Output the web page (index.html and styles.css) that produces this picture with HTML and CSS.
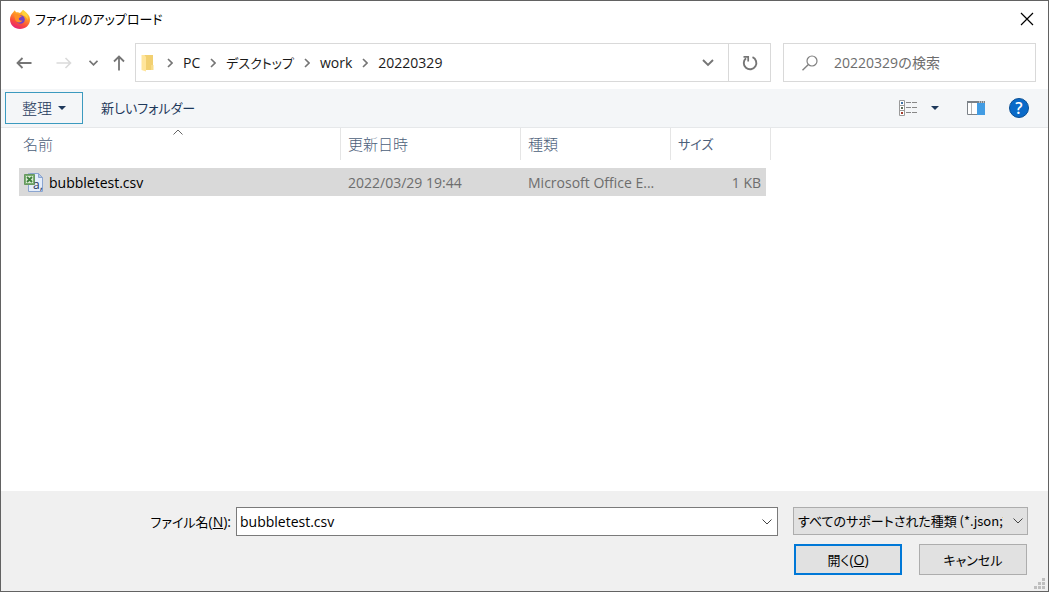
FILE: index.html
```html
<!DOCTYPE html>
<html lang="ja">
<head>
  <meta charset="UTF-8">
  <title>ファイルのアップロード</title>
  <link rel="stylesheet" href="styles.css">
</head>
<body>

<div class="dialog">
  <header class="title-bar">
    <svg class="app-icon" width="20" height="20" viewBox="0 0 20 20">
      <defs>
        <linearGradient id="flame" x1="0.8" y1="0" x2="0.3" y2="1">
          <stop offset="0" stop-color="#ffe14a"/>
          <stop offset="0.35" stop-color="#ff9a26"/>
          <stop offset="0.7" stop-color="#fb4a3c"/>
          <stop offset="1" stop-color="#e3207d"/>
        </linearGradient>
      </defs>
      <path fill="url(#flame)" d="M3 3.5 4.8 1.2 6 3.2 8 3.3 10 4 13 1 16.5 3.8C19 6 20 8 20 11 20 16 15.500 20 10 20S0 16 0 10.500C0 7.500 1 5.500 3 3.500Z"/>
      <circle cx="10.500" cy="10.500" r="4.300" fill="#7542c4"/>
      <path fill="#ff9025" d="M4 6C6 4.500 8 4.500 10 6.500L12 7C11 8.500 9.500 8 8.800 9.500 8.500 11 10 12 12.500 11.500 11 14 7 14 5.500 11.500Z"/>
      <path fill="#ffd43d" d="M13 1C17 3.500 18.500 7 17.500 11 16.800 8.500 15.500 7 13.500 6.500 11.500 5 11.500 3 13 1Z"/>
    </svg>
    <h1 class="kana">ファイルのアップロード</h1>
    <button class="close" aria-label="閉じる">
      <svg width="14" height="14" viewBox="0 0 14 14"><path d="M1 1 13 13M13 1 1 13" fill="none" stroke="#000" stroke-width="1.200"/></svg>
    </button>
  </header>

  <nav class="nav-bar">
    <div class="nav-buttons">
      <button aria-label="戻る"><svg width="16" height="12" viewBox="0 0 16 12"><path d="M15.500 6H1.500M6.500 1 1.500 6 6.500 11" fill="none" stroke="#757575" stroke-width="1.800"/></svg></button>
      <button class="forward" aria-label="進む" disabled><svg width="16" height="12" viewBox="0 0 16 12"><path d="M0.500 6H14.500M9.500 1 14.500 6 9.500 11" fill="none" stroke="#dadada" stroke-width="1.600"/></svg></button>
      <button class="recent" aria-label="最近表示した場所"><svg width="9" height="6" viewBox="0 0 9 6"><path d="M0.500 0.800 4.500 4.800 8.500 0.800" fill="none" stroke="#757575" stroke-width="1.700"/></svg></button>
      <button class="up" aria-label="上へ"><svg width="12" height="16" viewBox="0 0 12 16"><path d="M6 15.500V1.500M1 6.500 6 1.500 11 6.500" fill="none" stroke="#757575" stroke-width="1.800"/></svg></button>
    </div>
    <div class="address">
      <svg class="folder" width="13" height="18" viewBox="0 0 13 18">
        <path d="M2 1H12V16H2Z" fill="#f2d071"/>
        <path d="M0.500 1H3.500L5 3V17.500L0.500 16Z" fill="#ffe59b"/>
        <path d="M10 11H12.500V16H10Z" fill="#f8dc88"/>
      </svg>
      <svg class="sep" width="6" height="10" viewBox="0 0 6 10"><path d="M1 1 5 5 1 9"/></svg>
      <a href="#">PC</a>
      <svg class="sep" width="6" height="10" viewBox="0 0 6 10"><path d="M1 1 5 5 1 9"/></svg>
      <a href="#"><span class="kana">デスクトップ</span></a>
      <svg class="sep" width="6" height="10" viewBox="0 0 6 10"><path d="M1 1 5 5 1 9"/></svg>
      <a href="#">work</a>
      <svg class="sep" width="6" height="10" viewBox="0 0 6 10"><path d="M1 1 5 5 1 9"/></svg>
      <a href="#">20220329</a>
      <button class="history" aria-label="以前の場所"><svg width="12" height="8" viewBox="0 0 12 8"><path d="M1 1 6 6 11 1" fill="none" stroke="#757575" stroke-width="1.900"/></svg></button>
      <button class="refresh" aria-label="更新">
        <svg width="16" height="16" viewBox="0 0 16 16"><path d="M10.500 2.200A6.300 6.300 0 1 1 4 3.200" fill="none" stroke="#757575" stroke-width="1.900"/><path d="M1.500 1.800H6.200V6.500" fill="none" stroke="#757575" stroke-width="1.700"/></svg>
      </button>
    </div>
    <label class="search">
      <svg width="16" height="16" viewBox="0 0 16 16"><circle cx="10" cy="6" r="5" fill="none" stroke="#808080" stroke-width="1.200"/><path d="M6.400 9.600 0.500 15.300" stroke="#808080" stroke-width="1.400"/></svg>
      <input type="text" placeholder="20220329の検索" aria-label="20220329の検索">
    </label>
  </nav>

  <div class="toolbar">
    <button class="organize"><span class="jp">整理</span><svg width="8" height="4" viewBox="0 0 8 4"><path d="M0 0H8L4 4Z" fill="#1e395b"/></svg></button>
    <button class="new-folder"><span class="kana">新しいフォルダー</span></button>
    <button class="view" aria-label="表示方法">
      <svg width="18" height="16" viewBox="0 0 18 16">
        <path d="M0.500 0.500H5.500V15.500H0.500ZM0.500 5.500H5.500M0.500 10.500H5.500" fill="#fff" stroke="#9a9a9a"/>
        <path d="M2 2H4V4H2Z" fill="#3f73a8"/>
        <path d="M2 7H4V9H2Z" fill="#5d6b57"/>
        <path d="M2 12H4V14H2Z" fill="#a33b2b"/>
        <path d="M7 2.500H12M13 2.500H18M7 7.500H12M13 7.500H18M7 12.500H12M13 12.500H18" stroke="#888"/>
      </svg>
    </button>
    <button class="view-menu" aria-label="その他のオプション"><svg width="8" height="4" viewBox="0 0 8 4"><path d="M0 0H8L4 4Z" fill="#1e395b"/></svg></button>
    <button class="preview" aria-label="プレビュー ウィンドウ">
      <svg width="18" height="14" viewBox="0 0 18 14">
        <path d="M0.500 0.500H17.500V13.500H0.500Z" fill="#fff" stroke="#7c8288"/>
        <path d="M0 0H18V2H0Z" fill="#7c8288"/>
        <path d="M4.500 2V13" stroke="#b5b5b5"/>
        <path d="M10 2H18V14H10Z" fill="#429ce3"/>
        <path d="M12 1H13M14 1H15M16 1H17" stroke="#fff"/>
      </svg>
    </button>
    <button class="help" aria-label="ヘルプ">?</button>
  </div>

  <main class="files">
    <table>
      <thead>
        <tr>
          <th class="name">
            <span class="jp">名前</span>
            <svg class="sort" width="10" height="6" viewBox="0 0 10 6"><path d="M0.500 5.500 5 1 9.500 5.500" fill="none" stroke="#666"/></svg>
          </th>
          <th class="date"><span class="jp">更新日時</span></th>
          <th class="type"><span class="jp">種類</span></th>
          <th class="size"><span class="kana">サイズ</span></th>
        </tr>
      </thead>
      <tbody>
        <tr>
          <td class="file-name">
            <div class="file">
              <svg width="20" height="20" viewBox="0 0 20 20">
                <path d="M5.500 0.500H14.500L18.500 4.500V18.500H4.500V0.500Z" fill="#e4edfb" stroke="#8ba5d0"/>
                <path d="M14.500 0.500V4.500H18.500Z" fill="#b7c9e8" stroke="#8ba5d0"/>
                <path d="M0.500 1.500H10.500V11.500H0.500Z" fill="#79ad70" stroke="#67985f"/>
                <path d="M2 3H9V10H2Z" fill="#dcebd6"/>
                <path d="M3 4 8 9M8 4 3 9" stroke="#3d7f3a" stroke-width="1.800"/>
                <text x="9" y="16" class="icon-letter">a,</text>
              </svg>
              bubbletest.csv
            </div>
          </td>
          <td>2022/03/29 19:44</td>
          <td>Microsoft Office E...</td>
          <td class="file-size">1 KB</td>
        </tr>
      </tbody>
    </table>
  </main>

  <footer class="actions">
    <label class="file-label" for="fileName"><span class="kana">ファイル名</span>(<u>N</u>):</label>
    <div class="combo">
      <input type="text" id="fileName" value="bubbletest.csv">
      <button aria-label="履歴"><svg width="10" height="6" viewBox="0 0 10 6"><path d="M0.500 0.500 5 5 9.500 0.500" fill="none" stroke="#444"/></svg></button>
    </div>
    <div class="file-type">
      <select class="kana" aria-label="ファイルの種類">
        <option>すべてのサポートされた種類 (*.json;*.csv)</option>
      </select>
      <svg width="10" height="6" viewBox="0 0 10 6"><path d="M0.500 0.500 5 5 9.500 0.500" fill="none" stroke="#444"/></svg>
    </div>
    <div class="buttons">
      <button class="open"><span class="kana">開く</span>(<u>O</u>)</button>
      <button><span class="kana">キャンセル</span></button>
    </div>
    <svg class="grip" width="11" height="11" viewBox="0 0 11 11"><path d="M8 0H11V3H8ZM4 4H7V7H4ZM8 4H11V7H8ZM0 8H3V11H0ZM4 8H7V11H4ZM8 8H11V11H8Z" fill="#bfbfbf"/></svg>
  </footer>
</div>

</body>
</html>
```

FILE: styles.css
```css
* {
  box-sizing: border-box;
}

body {
  margin: 0;
  font-family: "Open Sans", "Noto Sans CJK JP", sans-serif;
  font-size: 14px;
  line-height: 20px;
  color: #1a1a1a;
}

button, input, select {
  font: inherit;
  color: inherit;
  margin: 0;
  padding: 0;
  border: none;
  background: none;
}

button {
  display: flex;
  align-items: center;
  justify-content: center;
}

svg {
  display: block;
  flex-shrink: 0;
}

.jp {
  font-family: "Noto Sans CJK JP", sans-serif;
  font-size: 15px;
  font-weight: 300;
}

.kana {
  font-family: "Noto Sans CJK JP", sans-serif;
  font-size: 13px;
  font-weight: 400;
  font-feature-settings: "palt";
}

.dialog {
  display: flex;
  flex-direction: column;
  min-height: 100vh;
  border: 1px solid #626262;
  background: #fff;
}

/* title bar */
.title-bar {
  display: flex;
  align-items: center;
  height: 36px;
  padding: 0 14px 0 9px;
}

.title-bar h1 {
  flex: 1;
  margin: 0 0 0 5px;
  color: #000;
}

/* address and search */
.nav-bar {
  display: flex;
  align-items: center;
  padding: 6px 12px 7px 15px;
}

.nav-buttons {
  display: flex;
  align-items: center;
  width: 119px;
}

.forward {
  margin-left: 24px;
}

.recent {
  margin-left: 17px;
}

.up {
  margin-left: 15px;
}

.address {
  flex: 1;
  display: flex;
  align-items: center;
  height: 39px;
  padding-left: 5px;
  border: 1px solid #d9d9d9;
}

.address a {
  color: inherit;
  text-decoration: none;
}

.sep {
  margin: 0 10px;
  fill: none;
  stroke: #757575;
  stroke-width: 1.6;
}

.folder + .sep {
  margin-left: 13px;
}

.history {
  width: 40px;
  height: 37px;
  margin-left: auto;
}

.refresh {
  width: 42px;
  height: 37px;
  border-left: 1px solid #d9d9d9;
}

.search {
  display: flex;
  align-items: center;
  width: 253px;
  height: 39px;
  margin-left: 12px;
  padding-left: 18px;
  border: 1px solid #d9d9d9;
}

.search input {
  flex: 1;
  min-width: 0;
  margin-left: 16px;
  outline: none;
}

.search input::placeholder {
  color: #6d6d6d;
  opacity: 1;
}

/* toolbar */
.toolbar {
  display: flex;
  align-items: center;
  height: 39px;
  padding: 0 19px 0 4px;
  border-bottom: 1px solid #e6e8ea;
  background: #f4f6f8;
  color: #1e395b;
}

.organize {
  width: 78px;
  height: 32px;
  gap: 6px;
  border: 1px solid #3b9abf;
}

.new-folder {
  margin-left: 18px;
}

.view {
  margin-left: auto;
}

.view-menu {
  margin-left: 14px;
}

.preview {
  margin-left: 28px;
}

.help {
  width: 20px;
  height: 20px;
  margin-left: 24px;
  border: 1px solid #0a4f94;
  border-radius: 50%;
  background: #0a6ac8;
  color: #fff;
  font-size: 16px;
  font-weight: 600;
}

/* file list */
.files {
  flex: 1;
  padding-left: 18px;
}

table {
  width: 752px;
  max-width: 100%;
  table-layout: fixed;
  border-spacing: 0;
}

th {
  position: relative;
  height: 32px;
  padding: 0 7px;
  border-right: 1px solid #e5e5e5;
  text-align: left;
  color: #4c607a;
}

.name {
  width: 322px;
  padding-left: 4px;
}

.date {
  width: 180px;
}

.type {
  width: 150px;
}

.size {
  width: 100px;
}

.sort {
  position: absolute;
  top: 1px;
  left: 48%;
}

td {
  height: 36px;
  padding: 1px 7px 0;
  border-top: 8px solid #fff;
  background: #d9d9d9;
  color: #6d6d6d;
  white-space: nowrap;
}

.file-name {
  padding-left: 5px;
  color: #000;
}

.file {
  display: flex;
  align-items: center;
  gap: 5px;
}

.icon-letter {
  font-family: "Open Sans", sans-serif;
  font-size: 12px;
  fill: #26375c;
}

.file-size {
  padding-right: 5px;
  border-right: 5px solid #fff;
  text-align: right;
}

/* bottom area */
.actions {
  position: relative;
  display: grid;
  grid-template-columns: 210px 1fr 235px;
  row-gap: 8px;
  padding: 16px 20px;
  background: #f0f0f0;
  color: #000;
}

.file-label {
  align-self: center;
  text-align: right;
}

.combo {
  display: flex;
  height: 29px;
  margin: 0 15px 0 5px;
  border: 1px solid #7a7a7a;
  background: #fff;
}

.combo input {
  flex: 1;
  min-width: 0;
  padding-left: 3px;
  outline: none;
}

.combo button {
  width: 20px;
}

.file-type {
  position: relative;
}

.file-type select {
  appearance: none;
  width: 100%;
  height: 28px;
  padding: 0 24px 0 4px;
  border: 1px solid #adadad;
  background: #e1e1e1;
}

.file-type svg {
  position: absolute;
  top: 11px;
  right: 5px;
  pointer-events: none;
}

.buttons {
  grid-column: 3;
  display: grid;
  grid-template-columns: 1fr 1fr;
  gap: 17px;
  padding: 0 1px;
}

.buttons button {
  height: 31px;
  border: 1px solid #adadad;
  background: #e1e1e1;
}

.buttons .open {
  border: 2px solid #0078d7;
}

.grip {
  position: absolute;
  right: 3px;
  bottom: 2px;
}
```
